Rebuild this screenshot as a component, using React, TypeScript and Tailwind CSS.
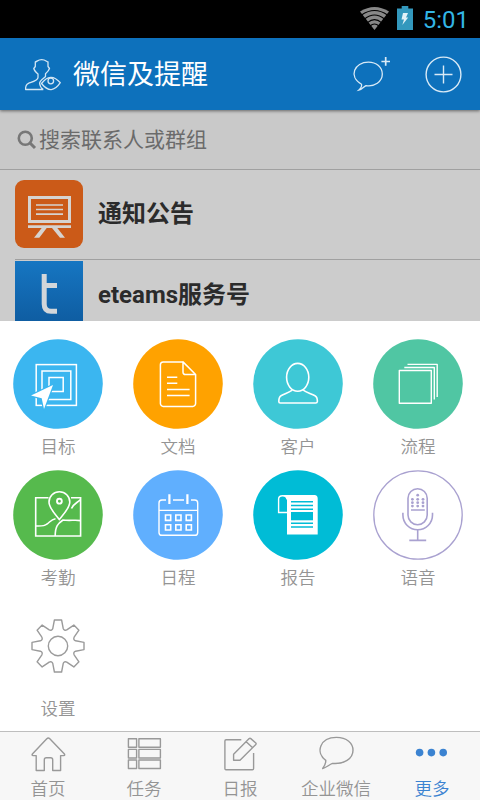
import type { ReactNode } from 'react';

type MenuItem = { label: string; icon: ReactNode };

const gearTooth = (i: number) => {
  const a = (i * Math.PI) / 4;
  const pt = (x: number, y: number) =>
    `${(45 + x * Math.cos(a) - y * Math.sin(a)).toFixed(2)} ${(45 + x * Math.sin(a) + y * Math.cos(a)).toFixed(2)}`;
  return `${i === 0 ? 'M' : 'L'}${pt(-5.2, -17.6)} L${pt(-3.6, -26)} L${pt(3.6, -26)} L${pt(5.2, -17.6)} Q${pt(6.2, -15)} ${pt(8.8, -16.1)}`;
};

const gearPath = [0, 1, 2, 3, 4, 5, 6, 7].map(gearTooth).join(' ') + ' Z';

const menuItems: MenuItem[] = [
  {
    label: '目标',
    icon: (
      <>
        <circle cx="45" cy="45" r="44.8" fill="#3bb6f0" />
        <g fill="none" stroke="#fff" strokeWidth="1.5">
          <rect x="23.2" y="25.6" width="40.2" height="40.8" />
          <rect x="29" y="32" width="28.8" height="28.5" />
          <rect x="36" y="38.5" width="14.2" height="14" />
        </g>
        <path d="M40 46L18 56.5L28.7 59.3L31 70Z" fill="#fff" stroke="#3bb6f0" strokeWidth="2.4" paintOrder="stroke" />
      </>
    ),
  },
  {
    label: '文档',
    icon: (
      <>
        <circle cx="45" cy="45" r="44.8" fill="#ffa200" />
        <g fill="none" stroke="#fff" strokeWidth="1.5" strokeLinejoin="round">
          <path d="M50 22.9H30.2a2.8 2.8 0 0 0-2.8 2.8V64.6a2.8 2.8 0 0 0 2.8 2.8H59.8a2.8 2.8 0 0 0 2.8-2.8V35.5L50 22.9V33.3a2.2 2.2 0 0 0 2.2 2.2H62.6" />
          <path d="M34 38.3H44.3M34 44.3H44.3M34 50.4H56.6M34 56.4H56.6" />
        </g>
      </>
    ),
  },
  {
    label: '客户',
    icon: (
      <>
        <circle cx="45" cy="45" r="44.8" fill="#3ec8d6" />
        <g fill="none" stroke="#fff" strokeWidth="1.6" strokeLinejoin="round">
          <ellipse cx="44.7" cy="38.3" rx="11.1" ry="13.9" />
          <path d="M39.3 51.2C36 53.5 31.5 54.8 28 56.8C26 58 25.8 60 25.8 62.5Q25.8 64 27.3 64H62.7Q64.2 64 64.4 62.5C64.4 60 64.2 58 62 56.8C58.5 54.8 53.5 53.5 50.2 51.2" />
        </g>
      </>
    ),
  },
  {
    label: '流程',
    icon: (
      <>
        <circle cx="45" cy="45" r="44.8" fill="#50c6a3" />
        <g fill="none" stroke="#fff" strokeWidth="1.4" strokeLinejoin="round">
          <rect x="26.3" y="31.5" width="32" height="32.8" />
          <path d="M31.3 28.5H61.3V60.5M34.5 25.4H64.2V58" />
        </g>
      </>
    ),
  },
  {
    label: '考勤',
    icon: (
      <>
        <circle cx="45" cy="45" r="44.8" fill="#56ba4d" />
        <g fill="none" stroke="#fff" strokeWidth="1.6">
          <path d="M35.5 27.8H22.7V66H67.6V27.8H58" />
          <path d="M22.7 56C28 56 31 56.5 34 54C37 52 38 49.5 42.5 48.7M67.6 50.6C62 49.6 57 51 50 50C45 53.5 42.2 56 42.2 66M67.6 29.5C64 33 60 34 58.5 38.5" />
          <path d="M46.3 49.5C42 44 36 38 36 32A10.4 10.2 0 0 1 56.8 32C56.8 38 50.6 44 46.3 49.5Z" />
          <circle cx="46.4" cy="31.2" r="2.4" strokeWidth="1.9" />
        </g>
      </>
    ),
  },
  {
    label: '日程',
    icon: (
      <>
        <circle cx="45" cy="45" r="44.8" fill="#60affe" />
        <g fill="none" stroke="#fff" strokeWidth="1.4">
          <path d="M33 30H29Q26 30 26 33V62.4Q26 65.3 29 65.3H61.7Q64.7 65.3 64.7 62.4V33Q64.7 30 61.7 30H58M40 30H51M26 40.4H64.7" />
          <path d="M36.4 24.3V34M54.4 24.3V34" strokeWidth="2.2" />
          <path d="M32.5 45h5.2v5.4h-5.2zM42.8 45h5.2v5.4h-5.2zM53.2 45h5.2v5.4h-5.2zM32.5 54.8h5.2v5.2h-5.2zM42.8 54.8h5.2v5.2h-5.2zM53.2 54.8h5.2v5.2h-5.2z" strokeWidth="1.6" />
        </g>
      </>
    ),
  },
  {
    label: '报告',
    icon: (
      <>
        <circle cx="45" cy="45" r="44.8" fill="#00bcd6" />
        <path d="M29 25H61.5Q64.7 25 64.7 28.5V64.6H34V27.5Z" fill="#fff" />
        <path d="M34 42.5H25.6V29Q25.6 25.7 29.6 25.7Q33.7 25.7 34 29.5" fill="#00bcd6" stroke="#fff" strokeWidth="1.4" />
        <path d="M38 31.7H60M38 35.5H60M38 39.2H60M38 53.3H60M38 57H60" stroke="#00bcd6" strokeWidth="1.4" />
        <rect x="38" y="42" width="22" height="8.3" fill="#00bcd6" />
      </>
    ),
  },
  {
    label: '语音',
    icon: (
      <>
        <circle cx="45" cy="45" r="44.2" fill="#fff" stroke="#a9a1d0" strokeWidth="1.3" />
        <g fill="none" stroke="#a9a1d0" strokeWidth="1.6">
          <rect x="35" y="18.7" width="19.2" height="36" rx="9.6" />
          <path d="M29.9 42.7V45A14.8 14.8 0 0 0 59.5 45V42.7M44.7 59.8V70.3M36.3 70.4H53.2M38 40H51.8" />
        </g>
        <g fill="#a9a1d0">
          <circle cx="44.7" cy="25.2" r="1.4" />
          {[29.3, 32.7, 36.1].map((y) =>
            [39.4, 44.7, 50].map((x) => <circle key={`${x}-${y}`} cx={x} cy={y} r="1.4" />)
          )}
        </g>
      </>
    ),
  },
  {
    label: '设置',
    icon: (
      <g fill="none" stroke="#9b9b9b" strokeWidth="1.4" strokeLinejoin="round">
        <path d={gearPath} />
        <circle cx="45" cy="45" r="9.7" />
      </g>
    ),
  },
];

const tabs: MenuItem[] = [
  {
    label: '首页',
    icon: (
      <path d="M8.2 19.6H5.2Q3.3 19.4 4.6 17.8L18.8 2.8Q20.3 1.4 21.8 2.8L36.2 17.8Q37.5 19.4 35.6 19.6H32.6V34.5H24.7V23.7Q24.7 21.7 22.7 21.7H18.3Q16.3 21.7 16.3 23.7V34.5H8.2Z" />
    ),
  },
  {
    label: '任务',
    icon: (
      <path d="M4.4 2.7h8.2v8.6H4.4zM14.9 2.7h21.5v8.6H14.9zM4.4 13.4h8.2v8.6H4.4zM14.9 13.4h21.5v8.6H14.9zM4.4 24h8.2v8.5H4.4zM14.9 24h21.5v8.5H14.9z" />
    ),
  },
  {
    label: '日报',
    icon: (
      <path d="M21.3 3.8H6Q4.9 3.8 4.9 5V32.6Q4.9 33.8 6 33.8H32.4Q33.6 33.8 33.6 32.6V17M13.6 24.2V18.2L29.2 2.6Q30 1.9 30.8 2.6L35.8 7Q36.5 7.7 35.8 8.4L20 24.2ZM26.2 5.8L32.4 11.6" />
    ),
  },
  {
    label: '企业微信',
    icon: <path d="M9.8 24.4C-1 16.5 4 1.4 20.4 1.4C31 1.4 37 7.5 37 14.3C37 23 28 28.3 16.5 27.4C13 28.7 10.5 31.6 6.7 32.5C8.4 30.3 9.8 28 9.8 24.4Z" />,
  },
  {
    label: '更多',
    icon: (
      <g fill="#3b83d1" stroke="none">
        <circle cx="7.6" cy="16.6" r="3.8" />
        <circle cx="19.4" cy="16.6" r="3.8" />
        <circle cx="31.2" cy="16.6" r="3.8" />
      </g>
    ),
  },
];

function StatusBar() {
  return (
    <div className="flex h-[38px] shrink-0 items-start justify-end bg-black pr-[11px]">
      <svg className="mt-[6px] mr-[7px]" width="31" height="25" viewBox="0 0 31 25">
        <path d="M15.5 24L1 5.5Q15.5-3.5 30 5.5Z" fill="#888" />
        <g fill="none" stroke="#000" strokeWidth="1.1">
          <path d="M2.5 9Q15.5 0 28.5 9M5.5 13Q15.5 5 25.5 13M8.5 16.7Q15.5 10.5 22.5 16.7M11 20Q15.5 16 20 20" />
        </g>
      </svg>
      <svg className="mt-[6px] mr-[10px]" width="16" height="24" viewBox="0 0 16 24">
        <path d="M4.7 0H11.3V2.5H16V24H0V2.5H4.7Z" fill="#3398bd" />
        <path d="M6 7H11L9 11.5H11.2L5.3 19L7 13.5H4.5Z" fill="#e3f2f8" />
      </svg>
      <span className="font-[Roboto,sans-serif] text-[24px] leading-[40px] text-[#33b5e5]">5:01</span>
    </div>
  );
}

function Header() {
  return (
    <header className="z-10 flex h-[72px] shrink-0 items-center bg-[#0d71bc] pl-6 pr-[18px] text-white shadow-[0_1px_3px_rgba(0,0,0,0.5)]">
      <svg width="38" height="33" viewBox="-1 -1 38 33" fill="none" stroke="#d3e6f4" strokeWidth="1.3" strokeLinejoin="round">
        <path d="M18.3 30.5H0.6C0.4 27 1 25.3 3.5 24.3C7 23 13 21.5 13 18.5V15C10.5 12.8 9 10.5 8.8 9.5L10.3 7.5V3C12 2.6 13 .6 16.7 .6C20.4 .6 21.5 2.6 23 3V7.5L24.5 9.5C24 11 22.5 13 20.5 14.7V17.5C18.5 19.5 14.8 21.3 14.6 24.3C14.8 27 16 29 18.3 30.5" />
        <path d="M16.5 24.5Q25.5 12.5 35.3 23.7Q26.5 37 16.5 24.5Z" />
        <circle cx="25.8" cy="22" r="2.8" />
      </svg>
      <h1 className="ml-[11px] pt-[2px] text-[27px] leading-10">微信及提醒</h1>
      <svg className="mr-[31px] ml-auto" width="44" height="40" viewBox="0 0 44 40" fill="none" stroke="#d9eaf6" strokeWidth="1.3">
        <path d="M11.5 30.2C-2 22.5 4.5 8.1 18.4 8.1C26.5 8.1 32.3 13.3 32.3 20.1C32.3 27.8 24.5 33 16 31.6C13.5 32.8 12 35.5 8.7 36.2C10.5 34.5 12.2 32.5 11.5 30.2Z" />
        <path d="M35.7 3V11.8M31.4 7.5H40" strokeWidth="1.7" />
      </svg>
      <svg width="37" height="37" viewBox="0 0 37 37" fill="none" stroke="#d9eaf6" strokeWidth="1.4">
        <circle cx="18.5" cy="18.5" r="17.4" />
        <path d="M18.5 9.5V27.5M9.5 18.5H27.5" />
      </svg>
    </header>
  );
}

function ChatList() {
  return (
    <div className="flex h-[211px] shrink-0 flex-col overflow-hidden bg-[#cccccc]">
      <div className="flex h-[60px] shrink-0 items-center border-b border-[#a0a0a0] bg-[#c9c9c9] pl-[17px] text-[#6b6b6b]">
        <svg width="20" height="20" viewBox="0 0 20 20" fill="none" stroke="#777" strokeWidth="2.6">
          <circle cx="8.3" cy="8.3" r="6.5" />
          <path d="M13 13L18 18" strokeWidth="3" />
        </svg>
        <span className="ml-[2px] pt-[2px] text-[21px]">搜索联系人或群组</span>
      </div>
      <div className="ml-[15px] flex h-[90px] shrink-0 items-start border-b border-[#a0a0a0] pt-[10px]">
        <svg width="68" height="68" viewBox="0 0 68 68">
          <rect width="68" height="68" rx="9" fill="#cb5a18" />
          <g stroke="#d6d3d0" fill="none">
            <rect x="14.5" y="17.5" width="40" height="24" strokeWidth="3" />
            <path d="M21 25H48M21 29.5H48M21 34.2H48" strokeWidth="1.7" />
            <path d="M13 46.6H56" strokeWidth="2.7" />
          </g>
          <path d="M26.7 48H31.7L24.3 57.8H19ZM37 48H42.3L50 57.8H45Z" fill="#d6d3d0" />
        </svg>
        <span className="ml-[15px] text-2xl leading-[68px] font-bold text-[#2b2b2b]">通知公告</span>
      </div>
      <div className="ml-[15px] flex shrink-0 items-start pt-px">
        <div className="h-[68px] w-[68px] bg-linear-to-b from-[#1676c2] to-[#0e5a9e]">
          <svg width="68" height="68" viewBox="0 0 68 68" fill="none" stroke="#d2d6da" strokeWidth="5">
            <path d="M29.2 13V43Q29.2 50.3 36 50.3H42" />
            <path d="M29 24.5H42" />
          </svg>
        </div>
        <span className="ml-[15px] text-2xl leading-[68px] font-bold text-[#2b2b2b]">eteams服务号</span>
      </div>
    </div>
  );
}

export default function App() {
  return (
    <div className="flex h-[800px] w-[480px] flex-col overflow-hidden bg-white font-[Roboto,'Noto_Sans_CJK_SC',sans-serif]">
      <StatusBar />
      <Header />
      <ChatList />

      <main className="grid h-[410px] shrink-0 grid-cols-4 content-start bg-white pt-[18px]">
        {menuItems.map((item) => (
          <button key={item.label} className="flex h-[131px] flex-col items-center pr-1">
            <svg width="90" height="90" viewBox="0 0 90 90">
              {item.icon}
            </svg>
            <span className="mt-[5px] font-['Noto_Sans_CJK_SC',sans-serif] text-[17.5px] leading-6 font-[350] text-[#949494]">{item.label}</span>
          </button>
        ))}
      </main>

      <nav className="grid h-[69px] shrink-0 grid-cols-5 border-t border-[#bebebe] bg-[#f7f7f7]">
        {tabs.map((tab) => (
          <button key={tab.label} className="flex flex-col items-center pt-1 text-[#949494] last:text-[#3b83d1]">
            <svg className="shrink-0" width="40" height="36" viewBox="0 0 40 36" fill="none" stroke="#999" strokeWidth="1.4" strokeLinejoin="round">
              {tab.icon}
            </svg>
            <span className="mt-1 font-['Noto_Sans_CJK_SC',sans-serif] text-[17.5px] leading-6 font-[350]">{tab.label}</span>
          </button>
        ))}
      </nav>
    </div>
  );
}
